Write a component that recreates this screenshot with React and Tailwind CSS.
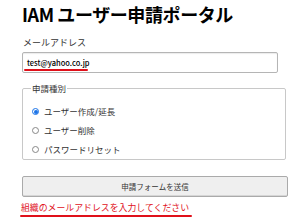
export default function App() {
  const options = ["ユーザー作成/延長", "ユーザー削除", "パスワードリセット"];
  return (
    <div
      className="w-[300px] h-[222px] bg-white overflow-hidden px-[22px] text-[#222]"
      style={{ fontFamily: '"Noto Sans CJK JP", "Noto Sans", sans-serif' }}
    >
      <h1 className="text-[18px] font-bold leading-[28px] text-black whitespace-nowrap tracking-[-0.4px]">
        IAM ユーザー申請ポータル
      </h1>

      <div className="mt-[9px] text-[9px] leading-[12px] text-[#333] pl-[1px]">メールアドレス</div>
      <div className="relative mt-[3px] h-[21px] border border-[#b5b5b5] rounded-[2px] shadow-[inset_0_1px_1px_rgba(0,0,0,0.08)] flex items-center px-[4px]">
        <span className="text-[7.5px] leading-[10px] text-black font-medium">test@yahoo.co.jp</span>
        <div className="absolute left-[1px] bottom-[1px] w-[64px] h-[2px] bg-[#e0101a] rounded-full" />
      </div>

      <fieldset className="mt-[10px] border border-[#c8c8c8] rounded-[2px] px-[9px] pb-[3px] w-[264px]">
        <legend className="px-[1px] ml-[-1px] text-[8.5px] leading-[11px] text-[#333]">申請種別</legend>
        <div className="flex flex-col gap-[6px] pt-[11px]">
          {options.map((o, i) => (
            <label key={o} className="flex items-center gap-[5px] h-[13px] text-[8.5px] text-[#333] whitespace-nowrap">
              {i === 0 ? (
                <span className="w-[7px] h-[7px] rounded-full border border-[#1a73e8] flex items-center justify-center">
                  <span className="w-[4px] h-[4px] rounded-full bg-[#1a73e8]" />
                </span>
              ) : (
                <span className="w-[7px] h-[7px] rounded-full border border-[#888]" />
              )}
              {o}
            </label>
          ))}
        </div>
      </fieldset>

      <button className="mt-[16px] w-[266px] h-[21px] border border-[#aaa] rounded-[2px] bg-[#efefef] text-[7.5px] text-[#333] shadow-[inset_0_-1px_0_rgba(0,0,0,0.1)] flex items-center justify-center">
        申請フォームを送信
      </button>

      <div className="relative mt-[5px] -ml-[1px] w-fit pb-[3px]">
        <span className="block text-[8.9px] leading-[12px] text-[#e0101a] whitespace-nowrap">組織のメールアドレスを入力してください</span>
        <div className="absolute left-[-1px] right-[-3px] bottom-0 h-[2px] bg-[#e0101a] rounded-full" />
      </div>
    </div>
  );
}
